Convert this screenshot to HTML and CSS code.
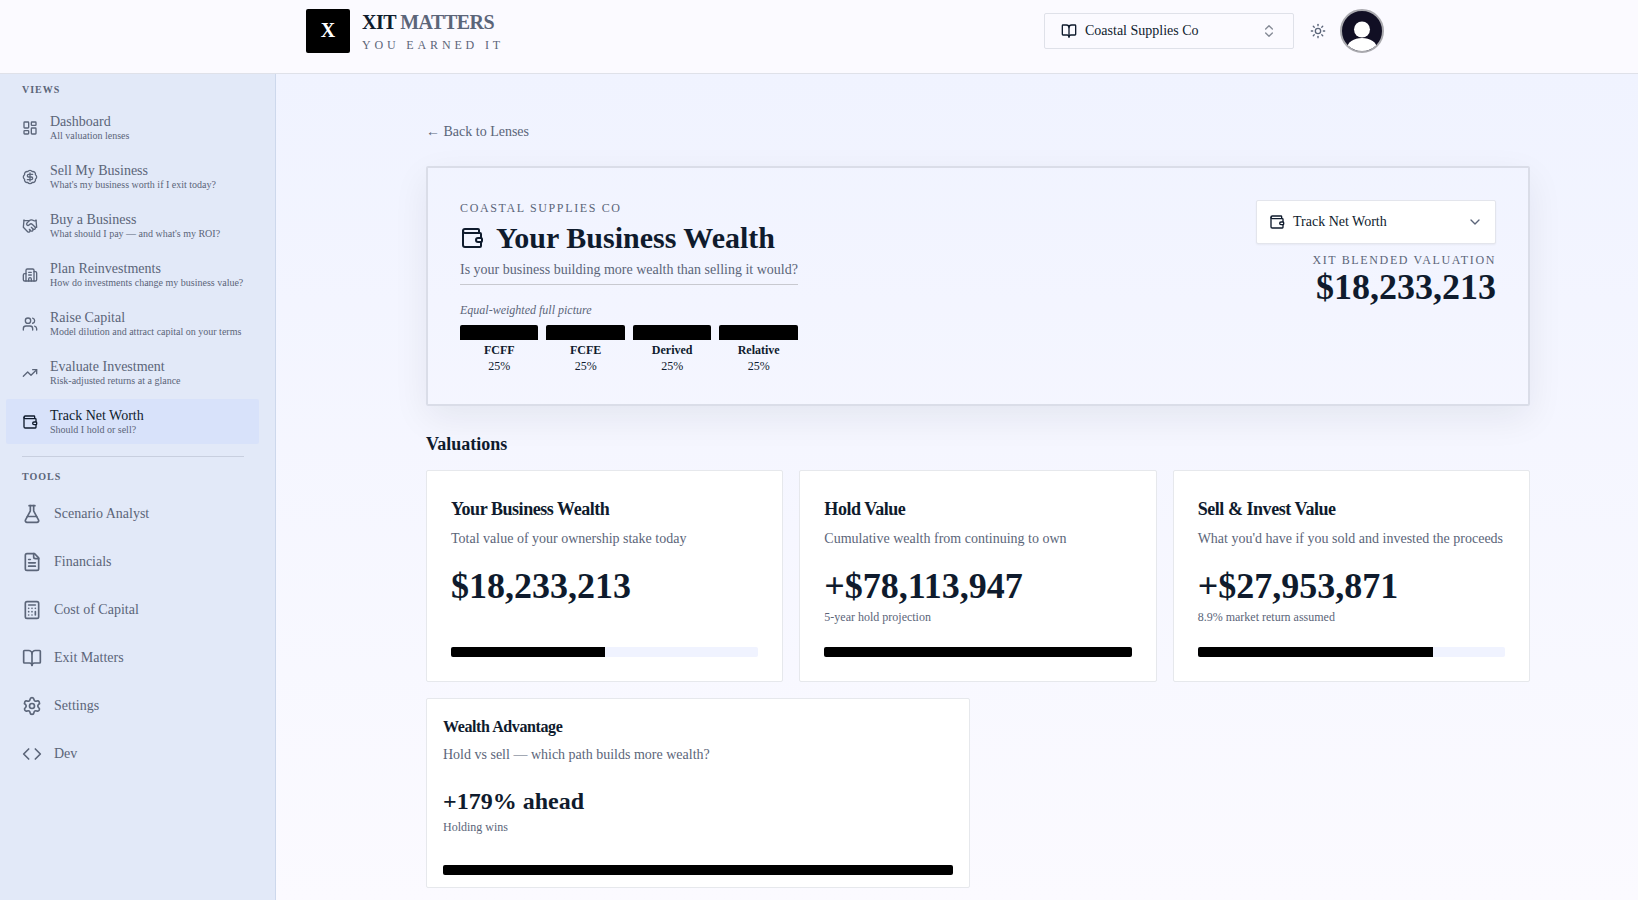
FILE: index.html
```html
<!DOCTYPE html>
<html lang="en">
<head>
<meta charset="utf-8">
<title>XIT Matters</title>
<link rel="stylesheet" href="styles.css">
</head>
<body>
<svg class="sprite" aria-hidden="true">
  <symbol id="dashboard" viewBox="0 0 24 24"><rect x="3" y="3" width="7" height="9" rx="1"/><rect x="14" y="3" width="7" height="5" rx="1"/><rect x="14" y="12" width="7" height="9" rx="1"/><rect x="3" y="16" width="7" height="5" rx="1"/></symbol>
  <symbol id="badge-dollar" viewBox="0 0 24 24"><path d="M3.85 8.62a4 4 0 0 1 4.78-4.77 4 4 0 0 1 6.74 0 4 4 0 0 1 4.78 4.78 4 4 0 0 1 0 6.74 4 4 0 0 1-4.77 4.78 4 4 0 0 1-6.75 0 4 4 0 0 1-4.78-4.77 4 4 0 0 1 0-6.76Z"/><path d="M16 8h-6a2 2 0 1 0 0 4h4a2 2 0 1 1 0 4H8"/><path d="M12 18V6"/></symbol>
  <symbol id="handshake" viewBox="0 0 24 24"><path d="m11 17 2 2a1 1 0 1 0 3-3"/><path d="m14 14 2.5 2.5a1 1 0 1 0 3-3l-3.88-3.88a3 3 0 0 0-4.24 0l-.88.88a1 1 0 1 1-3-3l2.81-2.81a5.79 5.79 0 0 1 7.06-.87l.47.28a2 2 0 0 0 1.42.25L21 4"/><path d="m21 3 1 11h-2"/><path d="M3 3 2 14l6.5 6.5a1 1 0 1 0 3-3"/><path d="M3 4h8"/></symbol>
  <symbol id="building" viewBox="0 0 24 24"><path d="M10 12h4"/><path d="M10 8h4"/><path d="M14 21v-3a2 2 0 0 0-4 0v3"/><path d="M6 10H4a2 2 0 0 0-2 2v7a2 2 0 0 0 2 2h16a2 2 0 0 0 2-2V9a2 2 0 0 0-2-2h-2"/><path d="M6 21V5a2 2 0 0 1 2-2h8a2 2 0 0 1 2 2v16"/></symbol>
  <symbol id="users" viewBox="0 0 24 24"><path d="M16 21v-2a4 4 0 0 0-4-4H6a4 4 0 0 0-4 4v2"/><path d="M16 3.128a4 4 0 0 1 0 7.744"/><path d="M22 21v-2a4 4 0 0 0-3-3.87"/><circle cx="9" cy="7" r="4"/></symbol>
  <symbol id="trending" viewBox="0 0 24 24"><path d="M16 7h6v6"/><path d="m22 7-8.5 8.5-5-5L2 17"/></symbol>
  <symbol id="wallet" viewBox="0 0 24 24"><path d="M19 7V4a1 1 0 0 0-1-1H5a2 2 0 0 0 0 4h15a1 1 0 0 1 1 1v4h-3a2 2 0 0 0 0 4h3a1 1 0 0 0 1-1v-2a1 1 0 0 0-1-1"/><path d="M3 5v14a2 2 0 0 0 2 2h15a1 1 0 0 0 1-1v-4"/></symbol>
  <symbol id="flask" viewBox="0 0 24 24"><path d="M14 2v6a2 2 0 0 0 .245.96l5.51 10.08A2 2 0 0 1 18 22H6a2 2 0 0 1-1.755-2.96l5.51-10.08A2 2 0 0 0 10 8V2"/><path d="M6.453 15h11.094"/><path d="M8.5 2h7"/></symbol>
  <symbol id="file" viewBox="0 0 24 24"><path d="M15 2H6a2 2 0 0 0-2 2v16a2 2 0 0 0 2 2h12a2 2 0 0 0 2-2V7Z"/><path d="M14 2v4a2 2 0 0 0 2 2h4"/><path d="M10 9H8"/><path d="M16 13H8"/><path d="M16 17H8"/></symbol>
  <symbol id="calculator" viewBox="0 0 24 24"><rect width="16" height="20" x="4" y="2" rx="2"/><path d="M8 6h8"/><path d="M16 14v4"/><path d="M16 10h.01"/><path d="M12 10h.01"/><path d="M8 10h.01"/><path d="M12 14h.01"/><path d="M8 14h.01"/><path d="M12 18h.01"/><path d="M8 18h.01"/></symbol>
  <symbol id="book" viewBox="0 0 24 24"><path d="M12 7v14"/><path d="M3 18a1 1 0 0 1-1-1V4a1 1 0 0 1 1-1h5a4 4 0 0 1 4 4 4 4 0 0 1 4-4h5a1 1 0 0 1 1 1v13a1 1 0 0 1-1 1h-6a3 3 0 0 0-3 3 3 3 0 0 0-3-3z"/></symbol>
  <symbol id="settings" viewBox="0 0 24 24"><path d="M9.671 4.136a2.34 2.34 0 0 1 4.659 0 2.34 2.34 0 0 0 3.319 1.915 2.34 2.34 0 0 1 2.33 4.033 2.34 2.34 0 0 0 0 3.831 2.34 2.34 0 0 1-2.33 4.033 2.34 2.34 0 0 0-3.319 1.915 2.34 2.34 0 0 1-4.659 0 2.34 2.34 0 0 0-3.32-1.915 2.34 2.34 0 0 1-2.33-4.033 2.34 2.34 0 0 0 0-3.831A2.34 2.34 0 0 1 6.35 6.051a2.34 2.34 0 0 0 3.319-1.915"/><circle cx="12" cy="12" r="3"/></symbol>
  <symbol id="code" viewBox="0 0 24 24"><path d="m16 18 6-6-6-6"/><path d="m8 6-6 6 6 6"/></symbol>
  <symbol id="up-down" viewBox="0 0 24 24"><path d="m7 15 5 5 5-5"/><path d="m7 9 5-5 5 5"/></symbol>
  <symbol id="down" viewBox="0 0 24 24"><path d="m6 9 6 6 6-6"/></symbol>
  <symbol id="sun" viewBox="0 0 24 24"><circle cx="12" cy="12" r="4"/><path d="M12 2v2"/><path d="M12 20v2"/><path d="m4.93 4.93 1.41 1.41"/><path d="m17.66 17.66 1.41 1.41"/><path d="M2 12h2"/><path d="M20 12h2"/><path d="m6.34 17.66-1.41 1.41"/><path d="m19.07 4.93-1.41 1.41"/></symbol>
</svg>

<header class="topbar">
  <div class="brand">
    <div class="brand-mark">X</div>
    <div class="brand-text">
      <div class="brand-name">XIT <span class="brand-soft">MATTERS</span></div>
      <div class="brand-tag">YOU EARNED IT</div>
    </div>
  </div>
  <div class="top-actions">
    <button class="company-select"><svg class="icon"><use href="#book"/></svg><span class="grow">Coastal Supplies Co</span><svg class="icon faded"><use href="#up-down"/></svg></button>
    <svg class="icon sun"><use href="#sun"/></svg>
    <div class="avatar"><svg viewBox="0 0 40 40"><circle cx="20" cy="18.5" r="8"/><ellipse cx="20" cy="37.5" rx="15" ry="10.5"/></svg></div>
  </div>
</header>

<div class="shell">
  <aside class="sidebar">
    <div class="group-title">VIEWS</div>
    <nav class="views">
      <a class="view"><svg class="icon"><use href="#dashboard"/></svg><span><span class="view-name">Dashboard</span><span class="view-sub">All valuation lenses</span></span></a>
      <a class="view"><svg class="icon"><use href="#badge-dollar"/></svg><span><span class="view-name">Sell My Business</span><span class="view-sub">What's my business worth if I exit today?</span></span></a>
      <a class="view"><svg class="icon"><use href="#handshake"/></svg><span><span class="view-name">Buy a Business</span><span class="view-sub">What should I pay — and what's my ROI?</span></span></a>
      <a class="view"><svg class="icon"><use href="#building"/></svg><span><span class="view-name">Plan Reinvestments</span><span class="view-sub">How do investments change my business value?</span></span></a>
      <a class="view"><svg class="icon"><use href="#users"/></svg><span><span class="view-name">Raise Capital</span><span class="view-sub">Model dilution and attract capital on your terms</span></span></a>
      <a class="view"><svg class="icon"><use href="#trending"/></svg><span><span class="view-name">Evaluate Investment</span><span class="view-sub">Risk-adjusted returns at a glance</span></span></a>
      <a class="view active"><svg class="icon"><use href="#wallet"/></svg><span><span class="view-name">Track Net Worth</span><span class="view-sub">Should I hold or sell?</span></span></a>
    </nav>
    <div class="divider"></div>
    <div class="group-title">TOOLS</div>
    <nav class="tools">
      <a class="tool"><svg class="icon"><use href="#flask"/></svg>Scenario Analyst</a>
      <a class="tool"><svg class="icon"><use href="#file"/></svg>Financials</a>
      <a class="tool"><svg class="icon"><use href="#calculator"/></svg>Cost of Capital</a>
      <a class="tool"><svg class="icon"><use href="#book"/></svg>Exit Matters</a>
      <a class="tool"><svg class="icon"><use href="#settings"/></svg>Settings</a>
      <a class="tool"><svg class="icon"><use href="#code"/></svg>Dev</a>
    </nav>
  </aside>

  <main class="main">
    <a class="back">← Back to Lenses</a>

    <section class="hero">
      <div class="hero-left">
        <div class="eyebrow">COASTAL SUPPLIES CO</div>
        <h1 class="hero-title"><svg class="icon"><use href="#wallet"/></svg>Your Business Wealth</h1>
        <p class="hero-question">Is your business building more wealth than selling it would?</p>
        <p class="mix-note">Equal-weighted full picture</p>
        <div class="mix">
          <div class="mix-item"><div class="mix-bar"></div><b>FCFF</b><span>25%</span></div>
          <div class="mix-item"><div class="mix-bar"></div><b>FCFE</b><span>25%</span></div>
          <div class="mix-item"><div class="mix-bar"></div><b>Derived</b><span>25%</span></div>
          <div class="mix-item"><div class="mix-bar"></div><b>Relative</b><span>25%</span></div>
        </div>
      </div>
      <div class="hero-right">
        <button class="lens-select"><svg class="icon"><use href="#wallet"/></svg><span class="grow">Track Net Worth</span><svg class="icon muted"><use href="#down"/></svg></button>
        <div class="eyebrow">XIT BLENDED VALUATION</div>
        <div class="hero-value">$18,233,213</div>
      </div>
    </section>

    <h2 class="section-title">Valuations</h2>
    <div class="cards">
      <article class="card">
        <h3 class="card-title">Your Business Wealth</h3>
        <p class="card-desc">Total value of your ownership stake today</p>
        <div class="card-value">$18,233,213</div>
        <div class="track"><div class="fill" style="width:50.2%"></div></div>
      </article>
      <article class="card">
        <h3 class="card-title">Hold Value</h3>
        <p class="card-desc">Cumulative wealth from continuing to own</p>
        <div class="card-value">+$78,113,947</div>
        <div class="card-note">5-year hold projection</div>
        <div class="track"><div class="fill" style="width:100%"></div></div>
      </article>
      <article class="card">
        <h3 class="card-title">Sell &amp; Invest Value</h3>
        <p class="card-desc">What you'd have if you sold and invested the proceeds</p>
        <div class="card-value">+$27,953,871</div>
        <div class="card-note">8.9% market return assumed</div>
        <div class="track"><div class="fill" style="width:76.6%"></div></div>
      </article>
    </div>
    <div class="cards halves">
      <article class="card compact">
        <h3 class="card-title">Wealth Advantage</h3>
        <p class="card-desc">Hold vs sell — which path builds more wealth?</p>
        <div class="card-value">+179% ahead</div>
        <div class="card-note">Holding wins</div>
        <div class="track"><div class="fill" style="width:100%"></div></div>
      </article>
    </div>
  </main>
</div>
</body>
</html>
```

FILE: styles.css
```css
* { box-sizing: border-box; }

body {
  margin: 0;
  height: 900px;
  overflow: hidden;
  display: flex;
  flex-direction: column;
  font: 14px/20px "Liberation Serif", serif;
  color: #0f1b2d;
  background: linear-gradient(180deg, #f0f3ff 0, #f0f3ff 74px, #fbfaff 900px);
}

h1, h2, h3, p { margin: 0; }
button { font: inherit; color: inherit; text-align: left; }
.sprite { position: absolute; width: 0; height: 0; }

.icon {
  width: 16px;
  height: 16px;
  flex: none;
  fill: none;
  stroke: currentColor;
  stroke-width: 2;
  stroke-linecap: round;
  stroke-linejoin: round;
}
.grow { flex: 1; }
.faded { opacity: .5; }
.muted { color: #5b6579; }

/* Top bar */
.topbar {
  flex: none;
  height: 74px;
  padding: 9px 254px 0 306px;
  display: flex;
  justify-content: space-between;
  align-items: flex-start;
  background: #fbfaff;
  border-bottom: 1px solid #dfe1e9;
}
.brand { display: flex; gap: 12px; }
.brand-mark {
  width: 44px;
  height: 44px;
  border-radius: 2px;
  background: #000;
  color: #fff;
  font-size: 20px;
  font-weight: 700;
  line-height: 43px;
  text-align: center;
}
.brand-name {
  font-size: 20px;
  font-weight: 700;
  line-height: 27px;
  letter-spacing: -.5px;
}
.brand-soft { color: #5b6579; }
.brand-tag {
  margin-top: 1px;
  font-size: 12px;
  line-height: 16px;
  letter-spacing: 3.84px;
  color: #5b6579;
}
.top-actions { display: flex; align-items: center; }
.company-select {
  width: 250px;
  height: 36px;
  padding: 0 16px;
  display: flex;
  align-items: center;
  gap: 8px;
  border: 1px solid #dfe1e9;
  border-radius: 2px;
  background: #fbfaff;
}
.sun { margin: 0 14px 0 16px; color: #5b6579; }
.avatar {
  width: 44px;
  height: 44px;
  border: 2px solid #a9a9ae;
  border-radius: 50%;
  background: #110f24;
  overflow: hidden;
}
.avatar svg { display: block; width: 40px; height: 40px; fill: #fff; }

.shell { flex: 1; min-height: 0; display: flex; }

/* Sidebar */
.sidebar {
  width: 276px;
  flex: none;
  padding: 8px 16px 0 6px;
  background: #e2e9f8;
  border-right: 1px solid #cdd8ec;
  color: #5b6579;
}
.group-title {
  padding-left: 16px;
  font-size: 10px;
  font-weight: 700;
  line-height: 15px;
  letter-spacing: 1px;
}
.views { margin-top: 8px; display: flex; flex-direction: column; gap: 4px; }
.view {
  height: 45px;
  padding-left: 16px;
  display: flex;
  align-items: center;
  gap: 12px;
  border-radius: 2px;
}
.view.active { background: #d8e2fa; }
.view.active .icon, .view.active .view-name { color: #0f1b2d; }
.view-name { display: block; padding-top: 1px; line-height: 16px; }
.view-sub { display: block; font-size: 10px; line-height: 12px; white-space: nowrap; }
.divider { height: 1px; margin: 12px 15px 12px 16px; background: #c8cfdf; }
.tools { margin-top: 6px; }
.tool { height: 48px; padding-left: 16px; display: flex; align-items: center; gap: 12px; }
.tool .icon { width: 20px; height: 20px; }

/* Main column */
.main { flex: 1; padding: 48px 108px 0 150px; }
.back { display: block; color: #5b6579; }

.hero {
  margin-top: 24px;
  height: 240px;
  padding: 32px 32px 0;
  display: flex;
  justify-content: space-between;
  border: 2px solid #dadde8;
  border-radius: 2px;
  box-shadow: 0 12px 36px rgba(15, 27, 45, .07);
}
.eyebrow { font-size: 12px; line-height: 16px; letter-spacing: 1.63px; color: #5b6579; }
.hero-title {
  margin-top: 4px;
  display: flex;
  align-items: center;
  gap: 12px;
  font-size: 30px;
  line-height: 36px;
}
.hero-title .icon { width: 24px; height: 24px; }
.hero-question {
  margin-top: 4px;
  padding-bottom: 4px;
  border-bottom: 1px solid #c8c9d0;
  color: #5b6579;
}
.mix-note { margin-top: 17px; font-size: 12px; line-height: 16px; font-style: italic; color: #5b6579; }
.mix { margin-top: 7px; display: grid; grid-template-columns: repeat(4, 1fr); gap: 8px; }
.mix-item { display: flex; flex-direction: column; align-items: center; font-size: 12px; line-height: 16px; }
.mix-bar { width: 100%; height: 15px; margin-bottom: 2px; border-radius: 2px 2px 0 0; background: #000; }

.hero-right { display: flex; flex-direction: column; align-items: flex-end; }
.lens-select {
  width: 240px;
  height: 44px;
  margin-bottom: 8px;
  padding: 0 12px;
  display: flex;
  align-items: center;
  gap: 8px;
  border: 1px solid #e3e5ec;
  border-radius: 2px;
  background: #fff;
  box-shadow: 0 1px 2px rgba(0, 0, 0, .05);
}
.hero-value { font-size: 36px; font-weight: 700; line-height: 38px; }

.section-title { margin-top: 24px; font-size: 18px; line-height: 28px; }

.cards { margin-top: 12px; display: grid; grid-template-columns: repeat(3, 1fr); gap: 16px; }
.cards.halves { margin-top: 16px; grid-template-columns: repeat(2, 1fr); }
.card {
  height: 212px;
  padding: 24px;
  display: flex;
  flex-direction: column;
  border: 1px solid #e6e8ec;
  border-radius: 2px;
  background: #fff;
}
.card-title { font-size: 18px; line-height: 28px; letter-spacing: -.025em; }
.card-desc { margin-top: 6px; color: #5b6579; white-space: nowrap; }
.card-value { margin-top: 17px; font-size: 36px; font-weight: 700; line-height: 40px; }
.card-note { margin-top: 3px; font-size: 12px; line-height: 16px; color: #5b6579; }
.track { height: 10px; margin-top: auto; border-radius: 2px; background: #f0f3ff; overflow: hidden; }
.fill { height: 100%; background: #000; }

.card.compact { height: 190px; padding: 16px 16px 12px; }
.compact .card-title { font-size: 16px; line-height: 24px; }
.compact .card-value { margin-top: 20px; font-size: 24px; line-height: 32px; }
.compact .card-note { margin-top: 2px; }
```
